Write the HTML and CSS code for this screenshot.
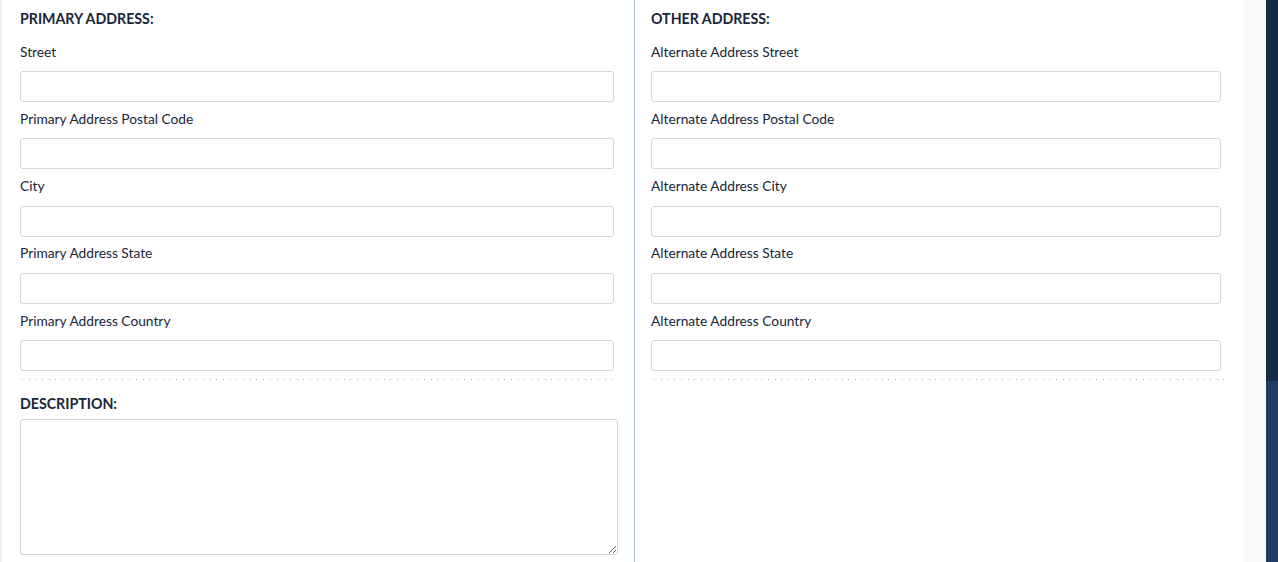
FILE: index.html
```html
<!DOCTYPE html>
<html>
<head>
<meta charset="utf-8">
<link rel="stylesheet" href="styles.css">
</head>
<body>
<div class="page">
  <div class="panel">
    <div class="col col-left">
      <div class="heading">PRIMARY ADDRESS:</div>
      <div class="field"><label class="label">Street</label><input class="input" type="text"></div>
      <div class="field"><label class="label">Primary Address Postal Code</label><input class="input" type="text"></div>
      <div class="field"><label class="label">City</label><input class="input" type="text"></div>
      <div class="field"><label class="label">Primary Address State</label><input class="input" type="text"></div>
      <div class="field last"><label class="label">Primary Address Country</label><input class="input" type="text"></div>
      <div class="dots"></div>
      <div class="heading desc-heading">DESCRIPTION:</div>
      <textarea class="textarea"></textarea>
    </div>
    <div class="divider"></div>
    <div class="col col-right">
      <div class="heading">OTHER ADDRESS:</div>
      <div class="field"><label class="label">Alternate Address Street</label><input class="input" type="text"></div>
      <div class="field"><label class="label">Alternate Address Postal Code</label><input class="input" type="text"></div>
      <div class="field"><label class="label">Alternate Address City</label><input class="input" type="text"></div>
      <div class="field"><label class="label">Alternate Address State</label><input class="input" type="text"></div>
      <div class="field last"><label class="label">Alternate Address Country</label><input class="input" type="text"></div>
      <div class="dots dots-right"></div>
    </div>
  </div>
  <div class="gutter"></div>
  <div class="sidebar"><div class="sb-top"></div><div class="sb-bottom"></div></div>
</div>
</body>
</html>
```

FILE: styles.css
```css
html, body {
  margin: 0;
  padding: 0;
  height: 100%;
  overflow: hidden;
}
body {
  font-family: Lato, "Open Sans", "Liberation Sans", sans-serif;
  font-size: 13.75px;
  color: #18263a;
  background: #ffffff;
}
.page {
  display: flex;
  height: 562px;
}
.panel {
  display: flex;
  width: 1242px;
  border-left: 2px solid #eef0f2;
  background: #ffffff;
}
.col {
  display: flex;
  flex-direction: column;
  padding-top: 9px;
}
.col-left {
  width: 594px;
  padding-left: 18px;
  padding-right: 20px;
}
.col-right {
  width: 570px;
  padding-left: 16px;
  padding-right: 23px;
}
.divider {
  width: 1px;
  background: #a3b9d5;
}
.heading {
  font-weight: bold;
  font-size: 14.2px;
  line-height: 20px;
  height: 20px;
  margin-bottom: 12px;
}
.field {
  display: flex;
  flex-direction: column;
  margin-bottom: 6.25px;
}
.field.last {
  margin-bottom: 8px;
}
.label {
  line-height: 20px;
  height: 20px;
  padding-top: 0.5px;
  margin-bottom: 9.5px;
}
.input {
  box-sizing: border-box;
  height: 31px;
  width: 100%;
  margin: 0;
  border: 1px solid #d3d7dc;
  border-radius: 3px;
  background: #fff;
  font: inherit;
}
.dots {
  height: 1px;
  margin-left: 2px;
  background-image: repeating-linear-gradient(to right, #a9aeb4 0, #a9aeb4 1px, transparent 1px, transparent 6.7px);
}
.dots-right {
  margin-left: 3px;
  margin-right: -3px;
}
.desc-heading {
  margin-top: 14px;
  margin-bottom: 5px;
}
.textarea {
  box-sizing: border-box;
  width: 598px;
  height: 136px;
  margin: 0;
  border: 1px solid #cfd3d8;
  border-radius: 3px;
  background: #fff;
  resize: both;
  font: inherit;
}
.gutter {
  width: 22px;
  background: #f8f9fb;
}
.sidebar {
  width: 12px;
  display: flex;
  flex-direction: column;
}
.sb-top {
  height: 381px;
  background: #152a47;
}
.sb-bottom {
  flex: 1;
  background: #203c5e;
}
```
